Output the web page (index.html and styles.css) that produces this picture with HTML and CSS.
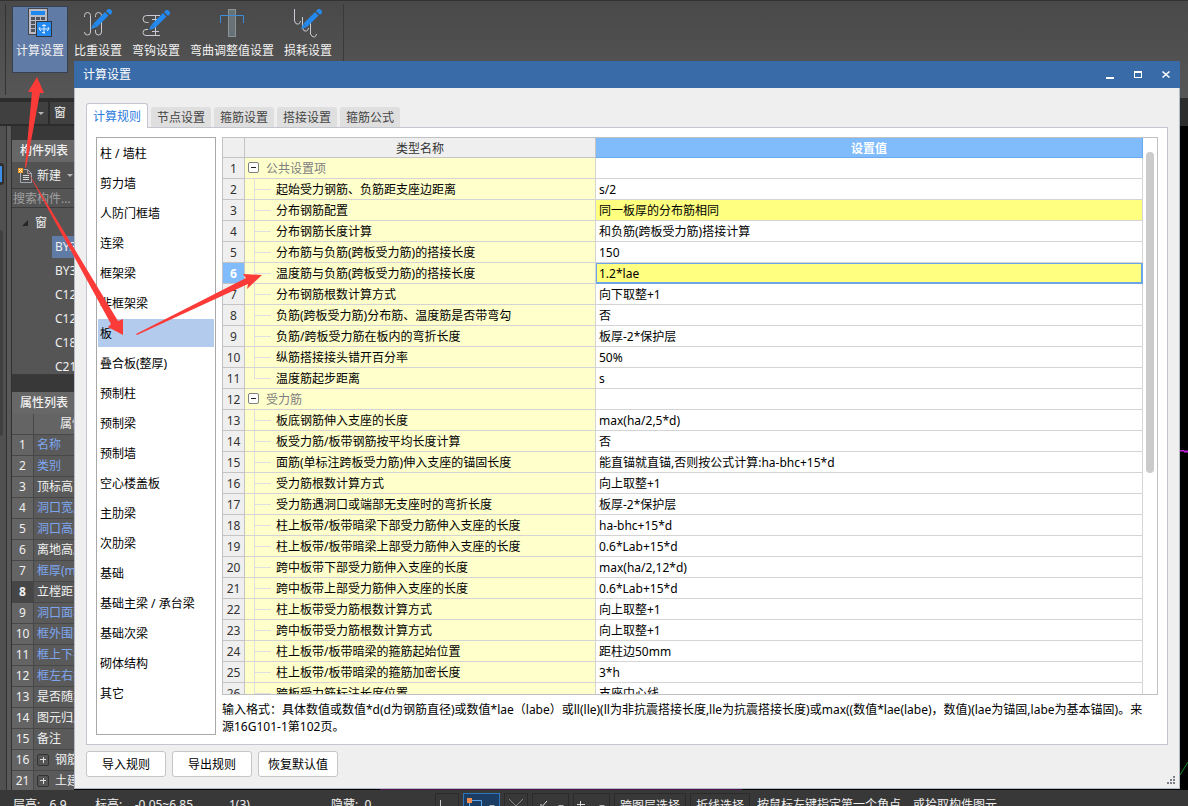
FILE: index.html
```html
<!DOCTYPE html>
<html lang="zh-CN">
<head>
<meta charset="utf-8">
<title>计算设置</title>
<link rel="stylesheet" href="styles.css">
</head>
<body>
<div class="app">
  <header class="ribbon">
    <div class="ribbon-group">
      <button class="tool active" type="button">
        <svg width="32" height="30" viewBox="24 8 32 30"><rect x="28.500" y="8.500" width="19" height="26" fill="#b9bcc6" stroke="#44464c"/><rect x="31" y="11" width="14" height="4" fill="#1e88f0"/><path d="M31 17h4v3h-4zM36 17h4v3h-4zM41 17h4v3h-4zM31 21h4v3h-4zM31 25h4v3h-4zM31 29h4v3h-4z" fill="#50535c"/><rect x="36.500" y="21.500" width="15" height="15" fill="#2489ee" stroke="#30343c"/><path d="M44 24v10M42 25.500h4M40 29h9M40 27l-1 2 2 2M48 27l1 2-2 2M42 32.500h3" fill="none" stroke="#d5e9ff"/></svg>
        <span>计算设置</span></button>
      <button class="tool" type="button">
        <svg width="32" height="30" viewBox="82 8 32 30"><path d="M84.500 17v-1.500a3 3 0 0 1 6 0V32a3 3 0 0 1-6 0M95.500 17v-1.500a3 3 0 0 1 6 0V32a3 3 0 0 1-6 0v-2" fill="none" stroke="#c9cbd3"/><path d="M91 29l2-5 4 3zM93.500 23.500L105 12l3.500 3.500L97 27zM106 11l2-2h2l2 2v2l-2 2z" fill="#2489ee"/></svg>
        <span>比重设置</span></button>
      <button class="tool" type="button">
        <svg width="32" height="30" viewBox="140 8 32 30"><path d="M160 15.500h-13.500a3.500 3.500 0 0 0 0 7h2M155.500 15.500v20M152 19.500h7M152 31.500h7M148 29.500h-2a3 3 0 0 0-3 3 3 3 0 0 0 3 3h14" fill="none" stroke="#c9cbd3"/><path d="M149 30l2-5 4 3zM151.500 24.500L163 13l3.500 3.500L155 28zM164 12l2-2h2l2 2v2l-2 2z" fill="#2489ee"/></svg>
        <span>弯钩设置</span></button>
      <button class="tool" type="button">
        <svg width="32" height="30" viewBox="216 8 32 30"><rect x="228.500" y="9.500" width="7" height="27" fill="#687175" stroke="#89959a"/><path d="M220.500 23v-7.500h23V23" fill="none" stroke="#3d8ddd"/></svg>
        <span>弯曲调整值设置</span></button>
      <button class="tool" type="button">
        <svg width="32" height="30" viewBox="292 8 32 30"><path d="M294.500 9v12q1 4 4 3 2-1 2-3M302.500 17v11q1 4 4 3 2-1 2-3M310.500 23v11q1 3 4 3 2-1 2-3" fill="none" stroke="#c9cbd3"/><path d="M301 29l2-5 4 3zM303.500 23.500L315 12l3.500 3.500L307 27zM316 11l2-2h2l2 2v2l-2 2z" fill="#2489ee"/></svg>
        <span>损耗设置</span></button>
    </div>
  </header>
  <div class="subbar">
    <button class="combo narrow" type="button" aria-label="楼层"><i class="caret"></i></button>
    <button class="combo" type="button">窗</button>
  </div>
  <main class="workspace">
    <div class="rail"><i class="rail-mark"></i><i class="rail-tab"></i></div>
    <aside class="sidebar">
      <section class="components">
        <h2>构件列表</h2>
        <div class="new-row">
          <button class="new" type="button">
            <svg width="16" height="16" viewBox="0 0 16 16"><path d="M2.500 4v10.500h11v-9l-4-4h-4M9.500 1.500v4h4" fill="none" stroke="#9fa9b3"/><path d="M5 7.500h6M5 9.500h6M5 11.500h6" stroke="#d4d7da"/><path d="M0 0h5v5H0z" fill="#f39a22"/><path d="M1 1h1v1H1zM3 1h1v1H3zM2 2h1v1H2zM1 3h1v1H1zM3 3h1v1H3z" fill="#fff1c9"/></svg>
            新建<i class="caret"></i></button>
        </div>
        <input class="search" type="text" placeholder="搜索构件..." aria-label="搜索构件">
        <div class="tree">
          <div class="tree-root"><i class="tri"></i>窗</div>
          <ul>
            <li class="picked"><span>BY3</span></li>
            <li><span>BY3</span></li>
            <li><span>C12</span></li>
            <li><span>C12</span></li>
            <li><span>C18</span></li>
            <li><span>C21</span></li>
          </ul>
        </div>
      </section>
      <section class="props">
        <h2>属性列表</h2>
        <table>
          <thead><tr><th class="n"></th><th class="title">属性</th></tr></thead>
          <tbody>
            <tr><td class="n">1</td><td class="key">名称</td></tr>
            <tr><td class="n">2</td><td class="key">类别</td></tr>
            <tr><td class="n">3</td><td>顶标高</td></tr>
            <tr><td class="n">4</td><td class="key">洞口宽度</td></tr>
            <tr><td class="n">5</td><td class="key">洞口高度</td></tr>
            <tr><td class="n">6</td><td>离地高度</td></tr>
            <tr><td class="n">7</td><td class="key">框厚(m</td></tr>
            <tr class="current"><td class="n">8</td><td>立樘距离</td></tr>
            <tr><td class="n">9</td><td class="key">洞口面积</td></tr>
            <tr><td class="n">10</td><td class="key">框外围面</td></tr>
            <tr><td class="n">11</td><td class="key">框上下扣</td></tr>
            <tr><td class="n">12</td><td class="key">框左右扣</td></tr>
            <tr><td class="n">13</td><td>是否随墙</td></tr>
            <tr><td class="n">14</td><td>图元归属</td></tr>
            <tr><td class="n">15</td><td>备注</td></tr>
            <tr><td class="n">16</td><td><button class="plus" type="button" aria-label="展开"></button>钢筋</td></tr>
            <tr><td class="n">21</td><td><button class="plus" type="button" aria-label="展开"></button>土建</td></tr>
          </tbody>
        </table>
      </section>
    </aside>
    <div class="canvas">
      <svg class="edge" width="8" height="340" viewBox="0 0 8 340"><path d="M0 .5h4M4 1.500h4" stroke="#c41ee0" stroke-width="2"/><path d="M0 325L8 312" stroke="#118a1b"/></svg>
    </div>
  </main>
  <footer class="status">
    <div class="status-line">
      <span class="s-floor">层高:&nbsp; &nbsp;6.9</span>
      <span class="s-level">标高:&nbsp; &nbsp; -0.05~6.85</span>
      <span class="s-count">1(3)</span>
      <span class="s-hidden">隐藏:&nbsp; 0</span>
      <button class="sb" type="button" aria-label="正交"><svg width="22" height="22" viewBox="0 0 22 22"><path d="M4.500 5v12h12" fill="none" stroke="#c8c8c8"/></svg></button>
      <button class="sb on" type="button" aria-label="捕捉"><svg width="22" height="22" viewBox="0 0 22 22"><path d="M5.500 5.500h12v12h-12z" fill="none" stroke="#5aa6ea"/><path d="M3 3h5v5H3z" fill="#f08c4e"/></svg><i class="caret"></i></button>
      <button class="sb" type="button" aria-label="交点"><svg width="22" height="22" viewBox="0 0 22 22"><path d="M4 4l14 14M18 4L4 18" stroke="#8a8a8a"/></svg></button>
      <button class="sb" type="button" aria-label="垂点"><svg width="22" height="22" viewBox="0 0 22 22"><path d="M14 6L6 15M8 9v4h4" fill="none" stroke="#ddd"/></svg><i class="caret"></i></button>
      <button class="sb" type="button" aria-label="偏移"><svg width="22" height="22" viewBox="0 0 22 22"><path d="M3 9.500h8M6.500 6v9" fill="none" stroke="#ddd"/></svg><i class="caret"></i></button>
      <button class="sb wide" type="button">跨图层选择</button>
      <button class="sb wide" type="button">折线选择</button>
      <span class="s-tip">按鼠标左键指定第一个角点，或拾取构件图元</span>
    </div>
  </footer>

  <div class="dialog" role="dialog" aria-label="计算设置">
    <div class="titlebar">
      <h1>计算设置</h1>
      <button type="button" aria-label="最小化"><svg width="10" height="10" viewBox="0 0 10 10"><path d="M1 7h8v2H1z" fill="#fff"/></svg></button>
      <button type="button" aria-label="最大化"><svg width="10" height="10" viewBox="0 0 10 10"><path d="M1 1h8v7H1zM2 3v4h6V3z" fill="#fff" fill-rule="evenodd"/></svg></button>
      <button type="button" aria-label="关闭"><svg width="10" height="10" viewBox="0 0 10 10"><path d="M1.500 1.500l7 6M8.500 1.500l-7 6" stroke="#fff" stroke-width="1.600"/></svg></button>
    </div>
    <div class="dialog-body">
      <div class="tabs" role="tablist">
        <button class="tab selected" type="button" role="tab">计算规则</button>
        <button class="tab" type="button" role="tab">节点设置</button>
        <button class="tab" type="button" role="tab">箍筋设置</button>
        <button class="tab" type="button" role="tab">搭接设置</button>
        <button class="tab" type="button" role="tab">箍筋公式</button>
      </div>
      <div class="panel">
        <nav class="cats">
          <button type="button">柱 / 墙柱</button>
          <button type="button">剪力墙</button>
          <button type="button">人防门框墙</button>
          <button type="button">连梁</button>
          <button type="button">框架梁</button>
          <button type="button">非框架梁</button>
          <button type="button" class="selected">板</button>
          <button type="button">叠合板(整厚)</button>
          <button type="button">预制柱</button>
          <button type="button">预制梁</button>
          <button type="button">预制墙</button>
          <button type="button">空心楼盖板</button>
          <button type="button">主肋梁</button>
          <button type="button">次肋梁</button>
          <button type="button">基础</button>
          <button type="button">基础主梁 / 承台梁</button>
          <button type="button">基础次梁</button>
          <button type="button">砌体结构</button>
          <button type="button">其它</button>
        </nav>
        <div class="detail">
          <div class="grid">
            <table class="rules">
              <colgroup><col class="c-num"><col class="c-name"><col></colgroup>
              <thead><tr><th></th><th>类型名称</th><th class="hot">设置值</th></tr></thead>
              <tbody>
                <tr class="group"><th>1</th><td><button class="minus" type="button" aria-label="收起"></button>公共设置项</td><td></td></tr>
                <tr><th>2</th><td>起始受力钢筋、负筋距支座边距离</td><td>s/2</td></tr>
                <tr class="changed"><th>3</th><td>分布钢筋配置</td><td>同一板厚的分布筋相同</td></tr>
                <tr><th>4</th><td>分布钢筋长度计算</td><td>和负筋(跨板受力筋)搭接计算</td></tr>
                <tr><th>5</th><td>分布筋与负筋(跨板受力筋)的搭接长度</td><td>150</td></tr>
                <tr class="changed current"><th>6</th><td>温度筋与负筋(跨板受力筋)的搭接长度</td><td>1.2*lae</td></tr>
                <tr><th>7</th><td>分布钢筋根数计算方式</td><td>向下取整+1</td></tr>
                <tr><th>8</th><td>负筋(跨板受力筋)分布筋、温度筋是否带弯勾</td><td>否</td></tr>
                <tr><th>9</th><td>负筋/跨板受力筋在板内的弯折长度</td><td>板厚-2*保护层</td></tr>
                <tr><th>10</th><td>纵筋搭接接头错开百分率</td><td>50%</td></tr>
                <tr class="last"><th>11</th><td>温度筋起步距离</td><td>s</td></tr>
                <tr class="group"><th>12</th><td><button class="minus" type="button" aria-label="收起"></button>受力筋</td><td></td></tr>
                <tr><th>13</th><td>板底钢筋伸入支座的长度</td><td>max(ha/2,5*d)</td></tr>
                <tr><th>14</th><td>板受力筋/板带钢筋按平均长度计算</td><td>否</td></tr>
                <tr><th>15</th><td>面筋(单标注跨板受力筋)伸入支座的锚固长度</td><td>能直锚就直锚,否则按公式计算:ha-bhc+15*d</td></tr>
                <tr><th>16</th><td>受力筋根数计算方式</td><td>向上取整+1</td></tr>
                <tr><th>17</th><td>受力筋遇洞口或端部无支座时的弯折长度</td><td>板厚-2*保护层</td></tr>
                <tr><th>18</th><td>柱上板带/板带暗梁下部受力筋伸入支座的长度</td><td>ha-bhc+15*d</td></tr>
                <tr><th>19</th><td>柱上板带/板带暗梁上部受力筋伸入支座的长度</td><td>0.6*Lab+15*d</td></tr>
                <tr><th>20</th><td>跨中板带下部受力筋伸入支座的长度</td><td>max(ha/2,12*d)</td></tr>
                <tr><th>21</th><td>跨中板带上部受力筋伸入支座的长度</td><td>0.6*Lab+15*d</td></tr>
                <tr><th>22</th><td>柱上板带受力筋根数计算方式</td><td>向上取整+1</td></tr>
                <tr><th>23</th><td>跨中板带受力筋根数计算方式</td><td>向上取整+1</td></tr>
                <tr><th>24</th><td>柱上板带/板带暗梁的箍筋起始位置</td><td>距柱边50mm</td></tr>
                <tr><th>25</th><td>柱上板带/板带暗梁的箍筋加密长度</td><td>3*h</td></tr>
                <tr><th>26</th><td>跨板受力筋标注长度位置</td><td>支座中心线</td></tr>
              </tbody>
            </table>
            <div class="scroll"><i></i></div>
          </div>
          <p class="hint">输入格式：具体数值或数值*d(d为钢筋直径)或数值*lae（labe）或ll(lle)(ll为非抗震搭接长度,lle为抗震搭接长度)或max((数值*lae(labe)，数值)(lae为锚固,labe为基本锚固)。来源16G101-1第102页。</p>
        </div>
      </div>
      <div class="actions">
        <button type="button">导入规则</button>
        <button type="button">导出规则</button>
        <button type="button">恢复默认值</button>
      </div>
    </div>
    <svg class="grip" width="9" height="9" viewBox="0 0 9 9"><path d="M6 0h2v2H6zM3 3h2v2H3zM6 3h2v2H6zM0 6h2v2H0zM3 6h2v2H3zM6 6h2v2H6z" fill="#7a7f8a"/></svg>
  </div>

  <svg class="arrows" width="280" height="350" viewBox="0 0 280 350">
    <path fill="#fb3b38" d="M37 77L44 93 40 93 26 168 25 167 32 92 28 92ZM25 167L118 321 123 319 123 335 108 327 111 324ZM136 334L246 278 243 274 262 275 247 289 248 284 137 335Z"/>
  </svg>
</div>
</body>
</html>
```
FILE: styles.css
```css
* { box-sizing: border-box; }
body {
  margin: 0;
  font-family: "Noto Sans", "Noto Sans CJK SC", sans-serif;
  font-size: 12px;
  line-height: 16px;
  color: #000;
}
button, input { font: inherit; color: inherit; margin: 0; padding: 0; border: 0; background: none; }
h1, h2, p, ul { margin: 0; padding: 0; font-size: 12px; font-weight: 400; list-style: none; }
svg { display: block; }
.app {
  position: relative;
  display: flex;
  flex-direction: column;
  height: 100vh;
  overflow: hidden;
  background: #383838;
}

/* ribbon */
.ribbon {
  flex: none;
  height: 100px;
  padding: 3px 0 3px 5px;
  background: linear-gradient(#494949, #565656);
  border-top: 1px solid #333;
  border-bottom: 2px solid #2c2c2c;
  display: flex;
  color: #f2f2f2;
}
.ribbon-group {
  display: flex;
  align-items: flex-start;
  gap: 2px;
  padding: 2px 7px 2px 6px;
  border-left: 1px solid #333;
  border-right: 1px solid #3a3a3a;
}
.tool {
  display: flex;
  flex-direction: column;
  align-items: center;
  gap: 5px;
  height: 67px;
  padding: 1px 3px;
  border: 1px solid transparent;
  white-space: nowrap;
}
.tool.active { background: #617ba7; border-color: #37404f; }
.subbar {
  flex: none;
  height: 26px;
  display: flex;
  gap: 2px;
  padding: 2px 0;
  background: #2c2c2c;
}
.combo {
  width: 120px;
  background: #404040;
  color: #f0f0f0;
  text-align: left;
  padding-left: 4px;
}
.combo.narrow { width: 48px; display: flex; align-items: center; justify-content: flex-end; padding-right: 4px; }
.caret {
  display: inline-block;
  border: 3px solid transparent;
  border-top-color: #b5b5b5;
  border-bottom-width: 0;
}

/* workspace */
.workspace { flex: 1; min-height: 0; display: flex; }
.rail {
  flex: none;
  width: 12px;
  background: linear-gradient(90deg, #505050 6px, #303030 6px, #303030 7px, #595959 7px);
  border-right: 1px solid #303030;
  padding-top: 37px;
}
.rail-mark {
  display: block;
  width: 4px;
  height: 22px;
  background: #3d8fe8;
  border: 4px solid #303030;
  border-width: 3px 2px 3px 0;
  border-radius: 0 3px 3px 0;
}
.rail-tab {
  display: block;
  width: 3px;
  height: 206px;
  margin-top: 45px;
  background: #404040;
  border-radius: 0 3px 3px 0;
}
.sidebar { flex: none; width: 62px; color: #f0f0f0; padding-top: 14px; overflow: hidden; }
.sidebar h2 { height: 22px; line-height: 22px; padding-left: 8px; background: #676767; font-weight: 500; }
.components { height: 235px; background: #555; border-bottom: 1px solid #3a3a3a; overflow: hidden; }
.new-row { height: 27px; background: #525252; border-bottom: 1px solid #3c3c3c; display: flex; align-items: center; padding: 1px 0 0 6px; }
.new { display: flex; align-items: center; gap: 3px; white-space: nowrap; }
.new .caret { margin-left: 3px; }
.search { display: block; width: 100%; height: 19px; padding-left: 1px; background: #555; border-bottom: 1px solid #3c3c3c; }
.search::placeholder { color: #a0a0a0; opacity: 1; }
.tree-root { height: 28px; display: flex; align-items: center; gap: 7px; padding: 1px 0 0 10px; }
.tri { border-left: 6px solid transparent; border-bottom: 6px solid #262626; }
.tree li { height: 24px; padding: 0 0 2px 40px; }
.tree li span { display: block; height: 22px; line-height: 22px; padding-left: 3px; }
.tree .picked span { background: #617ba7; }
.props { margin-top: 17px; }
.props table { width: 100%; table-layout: fixed; border-spacing: 0; background: #5a5a5a; }
.props th, .props td {
  height: 21px;
  padding: 0 0 0 3px;
  border-bottom: 1px solid #484848;
  font-weight: 400;
  text-align: left;
  white-space: nowrap;
  overflow: hidden;
}
.props .n { width: 22px; padding: 0; text-align: center; background: #646464; border-right: 1px solid #484848; }
.props .title { padding-left: 26px; background: #646464; }
.props .key { color: #7ea6f0; }
.props .current td { background: #555; }
.props .current .n { background: #464646; font-weight: 700; }
.plus, .minus {
  display: inline-block;
  vertical-align: middle;
  border-radius: 2px;
}
.plus {
  width: 12px;
  height: 12px;
  margin: 0 6px 2px 0;
  border: 1px solid #333;
  background: linear-gradient(#ddd, #ddd) center / 6px 1px no-repeat, linear-gradient(#ddd, #ddd) center / 1px 6px no-repeat, #555;
}
.canvas {
  flex: 1;
  padding-top: 324px;
  background: linear-gradient(90deg, #000 306px, #4a1050 306px, #4a1050 60%, #000 60%) bottom / 100% 1px no-repeat, #000;
}
.edge { margin-left: auto; }

/* status bar */
.status { flex: none; height: 16px; overflow: hidden; background: #383838; color: #f0f0f0; }
.status-line { display: flex; align-items: flex-start; padding: 3px 0 0 13px; line-height: 24px; white-space: nowrap; }
.s-floor { width: 82px; }
.s-level { width: 134px; }
.s-count { width: 102px; }
.s-hidden { width: 104px; }
.sb { display: flex; align-items: center; height: 26px; margin-right: 4px; border: 1px solid #2b2b2b; }
.sb .caret { margin: 0 4px 0 3px; }
.sb.on { background: #1b3c63; border-color: #2d74bd; }
.sb.wide { padding: 0 5px; }
.s-tip { margin-left: 3px; }

/* dialog */
.dialog {
  position: absolute;
  inset: 61px 8px 17px 74px;
  display: flex;
  flex-direction: column;
  background: #efefef;
  border: 1px solid #b3bac6;
  border-top: 0;
}
.titlebar {
  flex: none;
  height: 27px;
  margin: 0 -1px;
  display: flex;
  align-items: center;
  gap: 18px;
  padding: 0 9px;
  background: #386ba7;
  color: #fff;
}
.titlebar h1 { flex: 1; }
.dialog-body { flex: 1; min-height: 0; display: flex; flex-direction: column; padding: 15px 11px 11px; }
.tabs { position: relative; z-index: 1; display: flex; align-items: flex-end; gap: 3px; margin-bottom: -1px; }
.tab {
  height: 20px;
  width: 60px;
  margin-bottom: 1px;
  padding-top: 2px;
  background: #dfdfdf;
  border-radius: 3px 3px 0 0;
  color: #444;
}
.tab.selected {
  width: 62px;
  height: 25px;
  margin-bottom: 0;
  background: #fff;
  border: 1px solid #c3c6cc;
  border-bottom: 0;
  color: #2c7be0;
}
.panel {
  flex: 1;
  min-height: 0;
  display: flex;
  gap: 6px;
  padding: 9px;
  background: #fff;
  border: 1px solid #c3c6cc;
}
.cats { flex: none; width: 120px; border: 1px solid #a9a9a9; padding: 1px; }
.cats button { display: block; width: 100%; height: 28px; margin-bottom: 2px; padding: 2px 0 0 2px; text-align: left; }
.cats .selected { background: #b3cbed; }
.detail { flex: 1; min-width: 0; display: flex; flex-direction: column; }
.grid { flex: 1; min-height: 0; display: flex; border: 1px solid #bfc1c5; overflow: hidden; }
.rules { flex: 1; min-width: 0; align-self: flex-start; table-layout: fixed; border-spacing: 0; }
.c-num { width: 22px; }
.c-name { width: 351px; }
.rules th, .rules td {
  height: 21px;
  padding: 2px 0 0 3px;
  border-right: 1px solid #d4d4d4;
  border-bottom: 1px solid #d4d4d4;
  text-align: left;
  white-space: nowrap;
  overflow: hidden;
}
.rules th { padding: 2px 0 0; background: #efefef; color: #333; font-weight: 400; text-align: center; border-color: #c4c4c4; }
.rules thead th { height: 20px; }
.rules thead .hot { background: #80bbfb; border-color: #6ba9ee; color: #fff; font-weight: 700; }
.rules td:nth-child(2) {
  padding-left: 31px;
  background: linear-gradient(#dfdfdf, #dfdfdf) 9px 10px / 17px 1px no-repeat, linear-gradient(#dfdfdf, #dfdfdf) 9px 0 / 1px 100% no-repeat, #ffffcc;
}
.rules .last td:nth-child(2) { background-size: 17px 1px, 1px 10px; }
.rules .group td:nth-child(2) { padding-left: 3px; background: #ffffcc; color: #808080; }
.rules .changed td:nth-child(3) { background: #ffff80; }
.rules .current th { background: #80bbfb; color: #fff; font-weight: 700; }
.rules .current td:nth-child(3) { box-shadow: inset 0 0 0 1px #6aa5e8; border-color: #6aa5e8; }
.minus {
  width: 11px;
  height: 11px;
  margin: 0 7px 4px 0;
  border: 1px solid #808080;
  background: linear-gradient(#222, #222) center / 5px 1px no-repeat, #fff;
}
.scroll { flex: none; width: 14px; padding: 14px 3px 0; }
.scroll i { display: block; height: 321px; width: 8px; border-radius: 4px; background: #cbcbcb; }
.hint { flex: none; padding: 6px 8px 0 0; line-height: 17px; height: 40px; }
.actions { flex: none; display: flex; gap: 6px; padding-top: 6px; }
.actions button { width: 80px; height: 26px; padding-top: 1px; background: #fff; border: 1px solid #c6c6c6; border-radius: 3px; }
.grip { position: absolute; right: 3px; bottom: 3px; }

.arrows { position: absolute; left: 0; top: 0; pointer-events: none; }
```
